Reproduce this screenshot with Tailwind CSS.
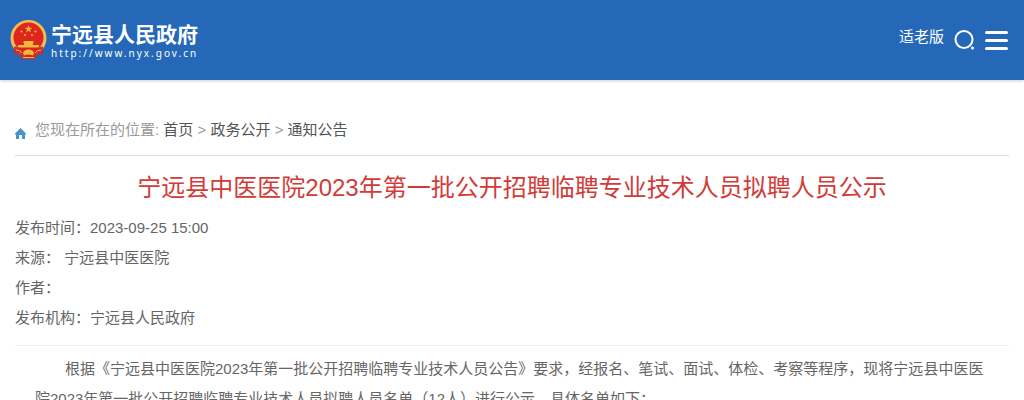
<!DOCTYPE html>
<html lang="zh-CN">
<head>
    <meta charset="UTF-8">
    <meta name="viewport" content="width=device-width, initial-scale=1.0">
    <title>宁远县中医医院2023年第一批公开招聘临聘专业技术人员拟聘人员公示</title>
    <script src="https://cdn.jsdelivr.net/npm/@tailwindcss/browser@4"></script>
</head>
<body class="h-screen overflow-hidden bg-white text-[15px] leading-[30px] text-[#666] font-['Liberation_Sans','Noto_Sans_CJK_SC',sans-serif]">

    <!-- Header -->
    <header class="flex h-20 items-center justify-between bg-[#2468b7] pl-[10px] pr-4 text-white shadow-[0_1px_3px_rgba(0,0,0,0.2)]">
        <a href="#" class="flex items-center gap-1">
            <svg class="h-10 w-[37px]" viewBox="0 0 37 40" aria-hidden="true">
                <path d="M4 26L5 35L10 34L12 39H25L27 34L32 35L33 26Z" fill="#d9281e"/>
                <circle cx="18.500" cy="18" r="18" fill="#f0bd55"/>
                <circle cx="18.500" cy="17.500" r="15" fill="#df261c"/>
                <path d="M18.500 5l1 2.700h2.900l-2.300 1.800.9 2.800-2.500-1.600-2.500 1.600.9-2.800-2.300-1.800h2.900z" fill="#f0b83c"/>
                <g fill="#f0b83c">
                    <circle cx="11.500" cy="11.500" r="1.100"/>
                    <circle cx="25.500" cy="11.500" r="1.100"/>
                    <circle cx="15" cy="15" r="1.100"/>
                    <circle cx="22" cy="15" r="1.100"/>
                    <path d="M14 21h9l1 2h-1v2h6v2.500H8V25h6v-2h-1z"/>
                </g>
                <path d="M4 26.500q7 1 10 4h9q3-3 10-4l-1 8-5-1-2 5.500H12l-2-5.500-5 1z" fill="#d9281e"/>
                <path d="M13 33q1-3.500 5.500-3.500T24 33l-1 2.500q-4.500-2-9 0z" fill="#f0b83c"/>
                <path d="M6 30q4 0 6 3M31 30q-4 0-6 3M13 37.500h11" fill="none" stroke="#f0bd55" stroke-width="1"/>
            </svg>
            <span class="flex flex-col pt-px">
                <span class="text-[21px] leading-6 font-bold">宁远县人民政府</span>
                <span class="text-[10px] leading-3 tracking-[2px] font-['Noto_Sans',sans-serif]">http://www.nyx.gov.cn</span>
            </span>
        </a>
        <nav class="flex items-center gap-[10px]">
            <a href="#" class="pb-1.5">适老版</a>
            <button type="button" aria-label="搜索">
                <svg class="h-5 w-[21px]" viewBox="0 0 21 20" fill="none">
                    <circle cx="10" cy="9.500" r="8.500" stroke="#fff" stroke-width="2"/>
                    <circle cx="18.500" cy="18" r="1.500" fill="#fff"/>
                </svg>
            </button>
            <button type="button" aria-label="菜单" class="flex w-[23px] flex-col gap-[5px]">
                <span class="h-[3px] w-full rounded-full bg-white"></span>
                <span class="h-[3px] w-full rounded-full bg-white"></span>
                <span class="h-[3px] w-full rounded-full bg-white"></span>
            </button>
        </nav>
    </header>

    <main class="px-[15px] pt-[35px]">
        <!-- Breadcrumb -->
        <nav class="flex items-center border-b border-[#ddd] pb-[10px] text-[#999]">
            <svg class="mt-1.5 mr-[9px] h-[11px] w-[11px]" viewBox="0 0 11 11" aria-hidden="true">
                <path d="M5.500 0L11 5.500V6.500H10V11H7V7H4V11H1V6.500H0V5.500Z" fill="#4a94c8"/>
            </svg>
            <p>您现在所在的位置: <a href="#" class="text-[#555]">首页</a> &gt; <a href="#" class="text-[#555]">政务公开</a> &gt; <a href="#" class="text-[#555]">通知公告</a></p>
        </nav>

        <!-- Article -->
        <article>
            <h1 class="pt-3 pb-[5px] text-center text-2xl leading-10 text-[#d23b38]">宁远县中医医院2023年第一批公开招聘临聘专业技术人员拟聘人员公示</h1>
            <ul class="border-b border-[#eee] pb-3">
                <li>发布时间：2023-09-25 15:00</li>
                <li>来源： 宁远县中医医院</li>
                <li>作者：</li>
                <li>发布机构：宁远县人民政府</li>
            </ul>
            <div class="px-5 pt-2">
                <p class="indent-[30px]">根据《宁远县中医医院2023年第一批公开招聘临聘专业技术人员公告》要求，经报名、笔试、面试、体检、考察等程序，现将宁远县中医医院2023年第一批公开招聘临聘专业技术人员拟聘人员名单（12人）进行公示，具体名单如下：</p>
            </div>
        </article>
    </main>

</body>
</html>
